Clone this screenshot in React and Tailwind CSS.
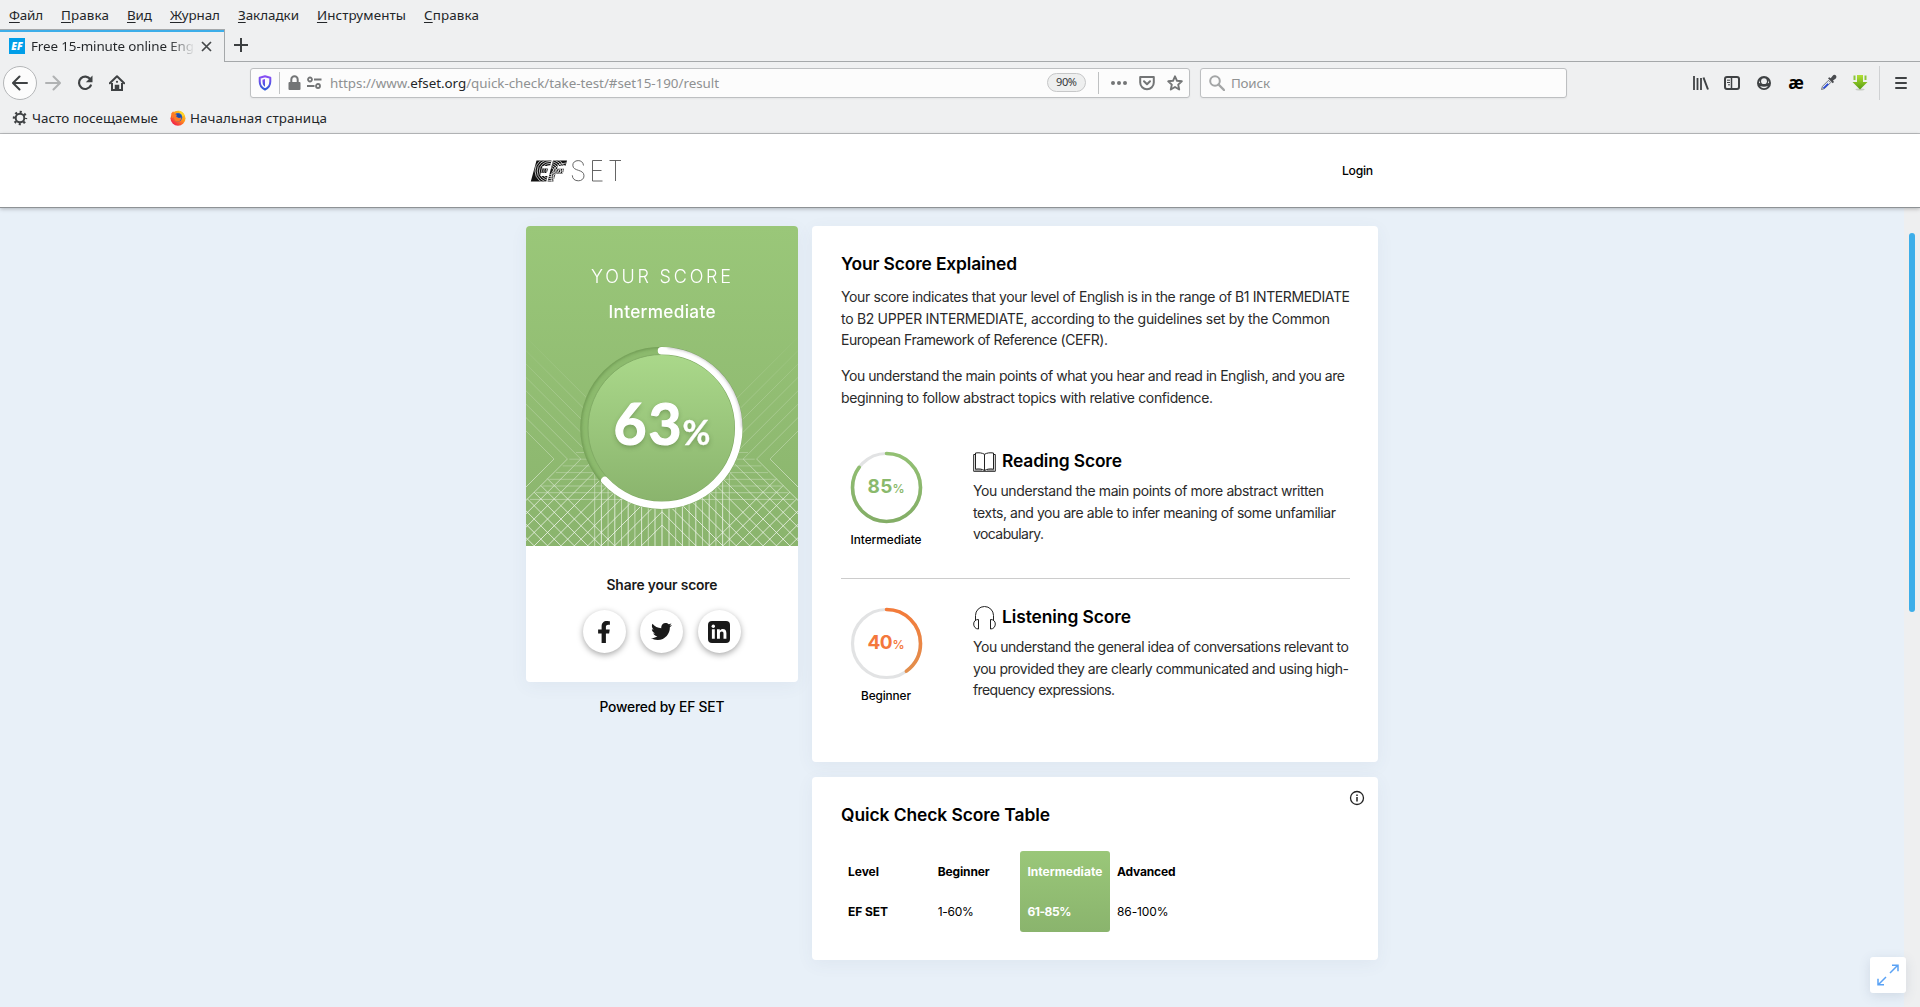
import React, { useLayoutEffect, useRef, useState } from "react";
import { FaFacebookF, FaTwitter } from "react-icons/fa";

/* Text set to an exact measure by adjusting its tracking. */
function Fit({ w, children, className = "" }) {
  const ref = useRef(null);
  const [tracking, setTracking] = useState(0);
  useLayoutEffect(() => {
    const natural = ref.current.getBoundingClientRect().width;
    const count = ref.current.textContent.length;
    setTracking((w - natural) / Math.max(1, count - 1));
  }, [w]);
  return (
    <span
      ref={ref}
      className={"inline-block whitespace-nowrap " + className}
      style={{ letterSpacing: tracking + "px", marginRight: -tracking + "px" }}
    >
      {children}
    </span>
  );
}

function Lines({ items, className = "" }) {
  return (
    <p className={"text-[14px] leading-[21.6px] text-[#2a2a2a] " + className}>
      {items.map(([w, text]) => (
        <span key={text} className="block h-[21.6px]">
          <Fit w={w}>{text}</Fit>
        </span>
      ))}
    </p>
  );
}

const menu = [
  ["Ф", "айл", 34],
  ["П", "равка", 48],
  ["В", "ид", 25],
  ["Ж", "урнал", 50],
  ["З", "акладки", 61],
  ["И", "нструменты", 89],
  ["С", "правка", 55],
];

function MenuBar() {
  return (
    <div className="flex h-[29px] gap-[18px] pl-[9px] text-[13.4px] leading-[31px] text-[#232629]">
      {menu.map(([first, rest, w]) => (
        <Fit key={first} w={w}>
          <span className="underline underline-offset-2">{first}</span>
          {rest}
        </Fit>
      ))}
    </div>
  );
}

function TabBar() {
  return (
    <div className="flex h-[33px]">
      <div className="flex w-[225px] shrink-0 items-center border-t border-r border-[#a5a8aa] bg-[#eff0f1]">
        <div className="flex h-full w-full items-center border-t-2 border-[#3daee9] pb-[2px] pl-[9px]">
          <span className="flex size-4 items-center justify-center bg-[#009ee8] text-[10px] font-black italic text-white">EF</span>
          <span className="ml-[6px] w-[164px] whitespace-nowrap bg-linear-to-r from-[#232629] from-84% to-transparent to-100% bg-clip-text text-[13.4px] text-transparent">
            <Fit w={163}>Free 15-minute online Eng</Fit>
          </span>
          <svg className="ml-[6px]" width="11" height="11" viewBox="0 0 11 11" fill="none" stroke="#45484a" strokeWidth="1.7">
            <path d="M1 1l9 9M10 1l-9 9" />
          </svg>
        </div>
      </div>
      <div className="flex flex-1 items-center border-b border-[#a5a8aa] pl-[9px]">
        <svg width="14" height="14" viewBox="0 0 14 14" stroke="#3c3f41" strokeWidth="2">
          <path d="M7 0v14M0 7h14" />
        </svg>
      </div>
    </div>
  );
}

function NavBar() {
  return (
    <div className="flex h-[41px] items-center pl-[3px]">
      <div className="flex size-[34px] items-center justify-center rounded-full border border-[#b4b6b8] bg-[#fcfcfc]">
        <svg width="16" height="16" viewBox="0 0 16 16" fill="none" stroke="#3f4244" strokeWidth="2" strokeLinecap="round" strokeLinejoin="round">
          <path d="M15 8H1.5M7.5 1.5L1 8l6.500 6.500" />
        </svg>
      </div>
      <svg className="ml-2" width="16" height="16" viewBox="0 0 16 16" fill="none" stroke="#b0b2b3" strokeWidth="2" strokeLinecap="round" strokeLinejoin="round">
        <path d="M1 8h13.500M8.500 1.500L15 8l-6.500 6.500" />
      </svg>
      <svg className="ml-4" width="16" height="16" viewBox="0 0 16 16" fill="none" stroke="#3f4244" strokeWidth="2.200">
        <path d="M13.300 4.200A6.200 6.200 0 1 0 13.800 10.500" strokeLinecap="round" />
        <path d="M15.500 0.500v6.700H8.800z" fill="#3f4244" stroke="none" />
      </svg>
      <svg className="ml-4" width="16" height="16" viewBox="0 0 16 16" fill="none" stroke="#3f4244" strokeWidth="2">
        <path d="M0.800 8.300L8 1.200l7.200 7.100" strokeLinecap="round" strokeLinejoin="round" />
        <path d="M3 8v7h10V8" />
        <path d="M6.500 15v-4.500h3V15" strokeWidth="1.500" fill="#3f4244" />
        <circle cx="8" cy="6.800" r="1.100" fill="#3f4244" stroke="none" />
      </svg>

      <div className="ml-[125px] flex h-[30px] w-[940px] items-center rounded-[3px] border border-[#bdbfc1] bg-[#fcfcfc] pl-[7px] shadow-xs">
        <svg width="14" height="16" viewBox="0 0 14 16" fill="none">
          <defs>
            <linearGradient id="shield" x1="0" y1="0" x2="0" y2="1">
              <stop offset="0" stopColor="#8a4df5" />
              <stop offset="1" stopColor="#2f5bd8" />
            </linearGradient>
          </defs>
          <path d="M7 1.200l5.300 1.500v3.800c0 3.800-2 6.400-5.300 8-3.300-1.600-5.300-4.200-5.300-8V2.700z" stroke="url(#shield)" strokeWidth="2" strokeLinejoin="round" />
          <path d="M7 4v7.800C5.300 10.600 4.500 9 4.500 6.500V4.700z" fill="url(#shield)" />
        </svg>
        <div className="ml-[7px] h-[22px] w-px bg-[#c2c4c5]" />
        <svg className="ml-[8px]" width="13" height="16" viewBox="0 0 13 16">
          <rect x="0.500" y="7" width="12" height="8" rx="1" fill="#737576" />
          <path d="M3.300 7.500V4.500a3.200 3.200 0 0 1 6.400 0v3" fill="none" stroke="#737576" strokeWidth="2" />
        </svg>
        <svg className="ml-[6px]" width="15" height="14" viewBox="0 0 15 14" fill="none" stroke="#737576" strokeWidth="1.800">
          <circle cx="3" cy="3.500" r="2" />
          <circle cx="11" cy="10" r="2" />
          <path d="M7 3.500h7.500M0 10h7.500" />
        </svg>
        <div className="mt-px ml-[8px] text-[13.4px] text-[#8f9192]">
          <Fit w={389}>
            https://www.<span className="text-[#232629]">efset.org</span>/quick-check/take-test/#set15-190/result
          </Fit>
        </div>
        <div className="ml-auto flex items-center">
          <span className="flex h-[19px] w-[39px] items-center justify-center rounded-full border border-[#c6c7c8] bg-[#eeefef] text-[11px] text-[#35383a]">
            <Fit w={21}>90%</Fit>
          </span>
          <div className="ml-[12px] h-[22px] w-px bg-[#bfc1c2]" />
          <svg className="ml-[12px]" width="16" height="4" viewBox="0 0 16 4" fill="#737576">
            <circle cx="2" cy="2" r="2" /><circle cx="8" cy="2" r="2" /><circle cx="14" cy="2" r="2" />
          </svg>
          <svg className="ml-[12px]" width="16" height="16" viewBox="0 0 16 16" fill="none" stroke="#737576" strokeWidth="2" strokeLinecap="round" strokeLinejoin="round">
            <path d="M1.200 2h13.600v5.500a6.800 6.800 0 0 1-13.600 0z" />
            <path d="M5 6.300l3 3 3-3" />
          </svg>
          <svg className="mr-[6px] ml-[12px]" width="16" height="16" viewBox="0 0 16 16" fill="none" stroke="#737576" strokeWidth="1.900" strokeLinejoin="round">
            <path d="M8 1.300l2 4.500 4.800.5-3.600 3.300 1 4.900L8 12l-4.200 2.500 1-4.900L1.200 6.300 6 5.800z" />
          </svg>
        </div>
      </div>

      <div className="ml-[10px] flex h-[30px] w-[367px] items-center rounded-[3px] border border-[#bdbfc1] bg-[#fcfcfc] pl-[8px] shadow-xs">
        <svg width="16" height="16" viewBox="0 0 16 16" fill="none" stroke="#a3a5a6" strokeWidth="2">
          <circle cx="6" cy="6" r="4.800" /><path d="M9.500 9.500l5.500 5.500" strokeWidth="2.400" strokeLinecap="round" />
        </svg>
        <span className="mt-px ml-[6px] text-[13.4px] text-[#909293]"><Fit w={39}>Поиск</Fit></span>
      </div>

      <div className="ml-auto flex items-center pr-[13px]">
        <svg width="16" height="16" viewBox="0 0 16 16" stroke="#3f4244" strokeWidth="2">
          <path d="M1 1v14M4.500 3v12M8 3v12" strokeWidth="1.800" /><path d="M10.500 2.500l4.500 12" />
        </svg>
        <svg className="ml-[15px]" width="16" height="16" viewBox="0 0 16 16" fill="none" stroke="#3f4244">
          <rect x="1" y="2" width="14" height="12" rx="2" strokeWidth="2" />
          <path d="M7.500 2v12" strokeWidth="1.500" /><path d="M3 5.200h3M3 7.500h3M4 9.800h2" strokeWidth="1" />
        </svg>
        <svg className="ml-[16px]" width="16" height="16" viewBox="0 0 16 16">
          <circle cx="8" cy="8" r="7" fill="#3f4244" />
          <circle cx="8" cy="6.200" r="2.900" fill="#eff0f1" />
          <path d="M3.800 5.200a5.300 5.300 0 0 0-.8 2.900l1.300.1a4.500 4.500 0 0 1-.5-3zM12.200 5.200a5.300 5.300 0 0 1 .8 2.900l-1.300.1a4.500 4.500 0 0 0 .5-3z" fill="#eff0f1" />
          <path d="M4.100 11c2.400 1.100 5.400 1.100 7.800 0-1 1.500-2.300 2.200-3.900 2.200S5.100 12.500 4.100 11z" fill="#eff0f1" />
        </svg>
        <span className="ml-[16px] flex h-5 w-4 items-center justify-center font-['Open_Sans',sans-serif] text-[17px] leading-4 font-bold text-black"><Fit w={15}>æ</Fit></span>
        <svg className="ml-[16px]" width="17" height="17" viewBox="0 0 17 17">
          <path d="M1.500 15.500l1-3.200 6-6 2.200 2.200-6 6z" fill="#dfe5ee" stroke="#74777c" strokeWidth="1" />
          <path d="M3 14l4.500-4.500 1 1L4.500 14.200z" fill="#2948d8" stroke="#2948d8" strokeWidth="0.500" />
          <path d="M8 4.300l1.300-1 1.400 1 2-2.600c1-1.200 2.600-1 3.200-.2.800.8.700 2.200-.4 3.200L13 6.600l1 1.300-1.300 1.300z" fill="#4a4c50" />
        </svg>
        <svg className="ml-[15px]" width="16" height="17" viewBox="0 0 16 17">
          <defs><linearGradient id="arrow" x1="0" y1="0" x2="0" y2="1"><stop offset="0" stopColor="#b2e034" /><stop offset="1" stopColor="#579c12" /></linearGradient></defs>
          <ellipse cx="8" cy="15.500" rx="4.500" ry="1" fill="#c9cdc5" />
          <path d="M5 1h6v7h4.500L8 15.500.5 8H5z" fill="url(#arrow)" />
          <path d="M1.500 1.500h2l0 4.500h-2l0-1.500M14.500 1.500h-2V6h2V4.500" fill="#8cc63a" />
        </svg>
        <div className="ml-[11px] h-[34px] w-px bg-[#cfd1d3]" />
        <svg className="ml-[15px]" width="12" height="12" viewBox="0 0 12 12" stroke="#3f4244" strokeWidth="2" strokeLinecap="round">
          <path d="M1 1h10M1 6h10M1 11h10" />
        </svg>
      </div>
    </div>
  );
}

function Bookmarks() {
  return (
    <div className="flex h-[31px] items-center border-b border-[#bcbec0] pl-[12px] text-[13.4px] text-[#232629]">
      <svg width="16" height="16" viewBox="-8 -8 16 16" fill="none" stroke="#3f4244">
        <circle r="4.300" strokeWidth="2" />
        <circle r="6" strokeWidth="2.400" strokeDasharray="2.100 2.612" strokeDashoffset="1.050" />
      </svg>
      <span className="ml-[4px]"><Fit w={126}>Часто посещаемые</Fit></span>
      <svg className="ml-[12px]" width="16" height="16" viewBox="0 0 16 16">
        <defs>
          <linearGradient id="fox" x1="1" y1="0" x2="0.200" y2="1">
            <stop offset="0" stopColor="#ffe226" /><stop offset="0.450" stopColor="#ff9a1a" /><stop offset="1" stopColor="#f0114f" />
          </linearGradient>
        </defs>
        <circle cx="8" cy="8.300" r="7.500" fill="url(#fox)" />
        <path d="M8.500 0.500c3.500.8 5.300 3 5.800 5l-2.300 1z" fill="#ffd52a" />
        <circle cx="8" cy="7.300" r="4.200" fill="#2460c8" />
        <path d="M1.200 3.500L3.200 1.200 4.500 4l2.500.7-1 2 2.500 1c1.200 0 2 0 2.500-.7.500 2.500-1 4.500-3.500 4.500S3.700 9.500 4 7.500L2 8z" fill="#ff7a26" />
        <path d="M6.500 4.300c2.500-1 5 .5 5 2.800-1 1.200-3 .7-4-.2z" fill="#1d4aa8" />
      </svg>
      <span className="ml-[4px]"><Fit w={137}>Начальная страница</Fit></span>
    </div>
  );
}

function SiteHeader() {
  return (
    <header className="relative z-10 h-[74px] border-b border-[#8e9295] bg-white shadow-[0_1px_4px_rgba(0,0,0,0.25)]">
      <div className="ml-[526px] flex h-[73px] w-[852px] items-center">
        <svg className="ml-[4px]" width="94" height="26" viewBox="0 0 94 26">
          <defs>
            <clipPath id="ef">
              <path d="M6.500 2.500H21.500L20 8H12.500L12 10.500H18L16.800 15H10.800L10.200 18H17.500L16.300 23.500H0.800z" />
              <path d="M23 2.500H37L35.600 8H27.800L27 10.800H34L32.800 15.800H25.500L23.400 23.500H17.600z" />
            </clipPath>
          </defs>
          <g clipPath="url(#ef)">
            <rect width="40" height="26" fill="#111" />
            <g fill="none" stroke="#fff" strokeWidth="0.700">
              {[4, 6.2, 8.4, 10.6, 12.8, 15].map((r) => <ellipse key={r} cx="20" cy="13" rx={r} ry={r * 0.9} />)}
              {[4, 6.2, 8.4, 10.6, 12.8, 15].map((r) => <ellipse key={"f" + r} cx="36" cy="20" rx={r} ry={r} />)}
            </g>
          </g>
          <g fill="none" stroke="#555" strokeWidth="0.900">
            <path d="M53.500 7.500C53.200 4 50.800 2.600 48.200 2.600c-3.200 0-5.400 1.900-5.400 4.600 0 6.600 11.200 3.500 11.200 10.600 0 3.100-2.400 5-5.700 5-3.600 0-5.900-2-6-5.500" />
            <path d="M72 2.500h-9.500v20.500H72.500M62.500 12.500h9" />
            <path d="M79.500 2.500H91M85.500 2.500V23" />
          </g>
        </svg>
        <span className="mt-[2px] mr-[5px] ml-auto text-[12.200px] font-medium text-black"><Fit w={31}>Login</Fit></span>
      </div>
    </header>
  );
}

const step = 13.4;
const range = (n) => Array.from({ length: n }, (_, i) => i);

/* Left half of the lattice behind the dial. */
function HalfPattern() {
  return (
    <g clipPath="url(#half)">
      {range(8).map((k) => (
        <path key={"u" + k} d={`M${28 + k * step} 233L${k * step - 105} 100`} opacity={0.75 - k * 0.03} />
      ))}
      {range(14).map((k) => (
        <path key={"d" + k} d={`M${28 + k * step} 233l-120 120`} />
      ))}
      {range(7).map((k) => {
        const c = 311.7 - k * step;
        const x = Math.max(-1, (274 - c) / 2);
        return <path key={"r" + k} d={`M${x} ${x + c}l70 70`} />;
      })}
      {range(8).map((k) => (
        <path key={"h" + k} d={`M${Math.max(4, 50 - k * 6.7)} ${226.5 + k * 6.7}H136`} opacity="0.6" />
      ))}
      {range(11).map((k) => (
        <path key={"v" + k} d={`M${68.7 + k * 6.7} ${248 + k * 3}V320`} opacity={k % 2 ? 1 : 0.7} />
      ))}
    </g>
  );
}

function ScoreHero() {
  const c = 2 * Math.PI * 77.3;
  return (
    <div className="relative h-[320px] overflow-hidden rounded-t-[4px] bg-linear-to-b from-[#9ac779] to-[#8ab46d]">
      <svg className="absolute inset-0" width="272" height="320" viewBox="0 0 272 320" fill="none">
        <defs>
          <clipPath id="half"><rect width="136" height="320" /></clipPath>
          <linearGradient id="fadeGrad" gradientUnits="userSpaceOnUse" x1="0" y1="0" x2="0" y2="320">
            <stop offset="0.320" stopColor="#000" /><stop offset="0.500" stopColor="#555" /><stop offset="0.750" stopColor="#808080" /><stop offset="0.900" stopColor="#ddd" />
          </linearGradient>
          <mask id="fade"><rect width="272" height="320" fill="url(#fadeGrad)" /></mask>
          <linearGradient id="disc" x1="0" y1="0" x2="0" y2="1">
            <stop offset="0" stopColor="#aad88a" /><stop offset="1" stopColor="#8ab46d" />
          </linearGradient>
          <filter id="soft" x="-20%" y="-20%" width="140%" height="140%"><feGaussianBlur stdDeviation="1.500" /></filter>
          <clipPath id="ring"><circle cx="135.500" cy="202" r="81.300" /></clipPath>
        </defs>
        <g mask="url(#fade)" stroke="#fff" strokeWidth="0.800">
          <HalfPattern />
          <g transform="translate(272 0) scale(-1 1)"><HalfPattern /></g>
        </g>
        <circle cx="135.500" cy="202" r="81.300" fill="#8cba6d" />
        <g clipPath="url(#ring)">
          <circle cx="135.500" cy="202" r="81.500" stroke="#648d49" strokeWidth="3" filter="url(#soft)" opacity="0.800" />
        </g>
        <circle cx="135.500" cy="202" r="73.500" fill="url(#disc)" stroke="#7fa963" strokeWidth="0.900" />
        <circle cx="135.500" cy="202" r="77.300" stroke="#fff" strokeWidth="7.500" strokeLinecap="round" strokeDasharray={`${c * 0.63} ${c}`} transform="rotate(-90 135.500 202)" />
        <g clipPath="url(#ring)">
          <path d="M142 120.800A81.400 81.400 0 0 1 217 202" stroke="#666" strokeWidth="2" opacity="0.550" filter="url(#soft)" />
        </g>
      </svg>
      <div className="relative flex flex-col items-center text-white">
        <div className="mt-[39px] -ml-[2px] h-[24px] text-[18px] leading-[24px] font-light"><Fit w={140}>YOUR SCORE</Fit></div>
        <div className="mt-[11px] h-[24px] text-[17.200px] leading-[24px] font-medium"><Fit w={107}>Intermediate</Fit></div>
        <div className="mt-[63px] flex h-[72px] items-baseline font-['Lato',sans-serif] leading-[72px] font-bold [text-shadow:0_2px_5px_rgba(60,90,40,0.45)]">
          <span className="text-[57px] [-webkit-text-stroke:1.2px_#fff]"><Fit w={68}>63</Fit></span>
          <span className="ml-[1px] text-[34px] [-webkit-text-stroke:0.4px_#fff]"><Fit w={28}>%</Fit></span>
        </div>
      </div>
    </div>
  );
}

function LinkedInIcon() {
  return (
    <svg width="22" height="22" viewBox="0 0 22 22">
      <rect width="22" height="22" rx="4" fill="#1a1a1a" />
      <g fill="#fff">
        <circle cx="5.300" cy="5.200" r="1.700" />
        <path d="M3.900 8.300h2.900v9.500H3.900zM9 8.300h2.800v1.400c.6-1 1.700-1.600 3-1.600 2.500 0 3.600 1.500 3.600 4.200v5.500h-2.900v-5c0-1.400-.5-2.200-1.700-2.200s-1.900.8-1.900 2.200v5H9z" />
      </g>
    </svg>
  );
}

function ShareCard() {
  const icons = [
    <FaFacebookF key="f" className="size-[22px]" />,
    <FaTwitter key="t" className="size-[21px]" />,
    <LinkedInIcon key="l" />,
  ];
  return (
    <div className="flex h-[136px] flex-col items-center text-[#1a1a1a]">
      <div className="mt-[27px] h-[24px] text-[13.800px] leading-[24px] font-semibold"><Fit w={111}>Share your score</Fit></div>
      <div className="mt-[13px] -ml-px flex gap-[14.500px]">
        {icons.map((icon) => (
          <span key={icon.key} className="flex size-[43px] items-center justify-center rounded-full bg-white shadow-[0_2px_6px_rgba(0,0,0,0.35)]">
            {icon}
          </span>
        ))}
      </div>
    </div>
  );
}

function Donut({ value, id, from, to, color, label, labelWidth }) {
  const c = 2 * Math.PI * 34;
  return (
    <div className="flex w-[90px] flex-col items-center pt-[2px]">
      <div className="grid place-items-center">
        <svg className="col-start-1 row-start-1" width="73" height="73" viewBox="0 0 73 73" fill="none">
          <defs>
            <linearGradient id={id} gradientUnits="userSpaceOnUse" x1="0" y1="0" x2="72" y2="0">
              <stop offset="0" stopColor={from} /><stop offset="1" stopColor={to} />
            </linearGradient>
          </defs>
          <circle cx="36.500" cy="36.500" r="34" stroke="#e2e3e4" strokeWidth="3.200" />
          <circle cx="36.500" cy="36.500" r="34" stroke={`url(#${id})`} strokeWidth="3.600" strokeLinecap="round" strokeDasharray={`${(c * value) / 100} ${c}`} transform="rotate(-90 36.500 36.500)" />
        </svg>
        <div className={"col-start-1 row-start-1 flex items-baseline font-bold " + color}>
          <span className="text-[19px]"><Fit w={25}>{String(value)}</Fit></span>
          <span className="text-[12px] font-semibold"><Fit w={10}>%</Fit></span>
        </div>
      </div>
      <div className="mt-[6px] h-[20px] text-[11.800px] leading-[20px] font-medium text-black"><Fit w={labelWidth}>{label}</Fit></div>
    </div>
  );
}

function BookIcon() {
  return (
    <svg className="mt-[2px]" width="23" height="20" viewBox="0 0 23 20" fill="none" stroke="#222" strokeWidth="1">
      <path d="M2.500 1C6 .500 9 .800 11.500 2.300 14 .800 17 .500 20.500 1v16.200c-3.500-.6-6.500-.2-9 1.300-2.500-1.500-5.500-1.900-9-1.300z" />
      <path d="M11.500 2.300v16.200" /><path d="M2.500 2.500H.7v16.800h21.600V2.500h-1.800" />
      <path d="M2 18h7M14 18h7" strokeWidth="0.700" />
    </svg>
  );
}

function HeadphonesIcon() {
  return (
    <svg className="mt-[2px]" width="23" height="24" viewBox="0 0 23 24" fill="none" stroke="#222" strokeWidth="1">
      <path d="M2.500 14.500V9.500a9 9 0 0 1 18 0v5" />
      <path d="M5.500 13.500v9.500C2.500 23 .7 20.800.7 18s1.800-4.500 4.800-4.500zM17.500 13.500v9.500c3 0 4.800-2.200 4.800-5s-1.800-4.500-4.800-4.500z" />
    </svg>
  );
}

function Skill({ donut, icon, title, titleWidth, lines }) {
  return (
    <div className="flex">
      {donut}
      <div className="ml-[42px]">
        <div className="flex h-[24px] items-center gap-[6px]">
          {icon}
          <h3 className="text-[17.400px] leading-[24px] font-semibold text-black"><Fit w={titleWidth}>{title}</Fit></h3>
        </div>
        <Lines className="mt-[7px]" items={lines} />
      </div>
    </div>
  );
}

function ExplainedCard() {
  return (
    <section className="h-[536px] rounded-[4px] bg-white pt-[26px] pr-[28px] pl-[29px] shadow-[0_4px_18px_rgba(70,90,120,0.06)]">
      <h2 className="h-[24px] text-[17.400px] leading-[24px] font-semibold text-black"><Fit w={176}>Your Score Explained</Fit></h2>
      <Lines
        className="mt-[10px]"
        items={[
          [509, "Your score indicates that your level of English is in the range of B1 INTERMEDIATE"],
          [489, "to B2 UPPER INTERMEDIATE, according to the guidelines set by the Common"],
          [267, "European Framework of Reference (CEFR)."],
        ]}
      />
      <Lines
        className="mt-[14.600px]"
        items={[
          [504, "You understand the main points of what you hear and read in English, and you are"],
          [372, "beginning to follow abstract topics with relative confidence."],
        ]}
      />
      <div className="mt-[40.400px] h-[130px] border-b border-[#cccccc]">
        <Skill
          donut={<Donut value={85} id="green" from="#83ad66" to="#93c173" color="text-[#8ab96c]" label="Intermediate" labelWidth={71} />}
          icon={<BookIcon />}
          title="Reading Score"
          titleWidth={120}
          lines={[
            [351, "You understand the main points of more abstract written"],
            [363, "texts, and you are able to infer meaning of some unfamiliar"],
            [71, "vocabulary."],
          ]}
        />
      </div>
      <div className="pt-[26px]">
        <Skill
          donut={<Donut value={40} id="orange" from="#e0914f" to="#f47b3a" color="text-[#f4783c]" label="Beginner" labelWidth={50} />}
          icon={<HeadphonesIcon />}
          title="Listening Score"
          titleWidth={129}
          lines={[
            [376, "You understand the general idea of conversations relevant to"],
            [376, "you provided they are clearly communicated and using high-"],
            [142, "frequency expressions."],
          ]}
        />
      </div>
    </section>
  );
}

const columns = [
  { head: "Level", hw: 31, cell: "EF SET", cw: 40, box: "text-black font-bold" },
  { head: "Beginner", hw: 52, cell: "1-60%", cw: 36, box: "text-black" },
  { head: "Intermediate", hw: 75, cell: "61-85%", cw: 44, box: "rounded-[3px] bg-linear-to-b from-[#9ac779] to-[#8ab46d] text-white font-bold" },
  { head: "Advanced", hw: 58.5, cell: "86-100%", cw: 51.5, box: "text-black" },
];

function TableCard() {
  return (
    <section className="relative mt-[15px] h-[183px] rounded-[4px] bg-white px-[29px] pt-[26px] shadow-[0_4px_18px_rgba(70,90,120,0.06)]">
      <svg className="absolute top-[13px] right-[13px]" width="16" height="16" viewBox="0 0 16 16" fill="none" stroke="#222" strokeWidth="1.300">
        <circle cx="8" cy="8" r="6.500" /><path d="M8 7v4.500M8 4.500v1.400" strokeWidth="1.500" />
      </svg>
      <h2 className="h-[24px] text-[17.400px] leading-[24px] font-semibold text-black"><Fit w={209}>Quick Check Score Table</Fit></h2>
      <div className="mt-[24px] grid grid-cols-[89.700px_89.700px_89.700px_89.700px] text-[12px] leading-[20px]">
        {columns.map((col) => (
          <div key={col.head} className={"flex h-[81px] flex-col gap-[20px] pt-[11px] pl-[7px] " + col.box}>
            <div className="h-[20px] font-bold"><Fit w={col.hw}>{col.head}</Fit></div>
            <div className="h-[20px]"><Fit w={col.cw}>{col.cell}</Fit></div>
          </div>
        ))}
      </div>
    </section>
  );
}

export default function App() {
  return (
    <div className="relative flex h-[1007px] w-[1920px] flex-col overflow-hidden bg-[#eff0f1] font-['Noto_Sans',sans-serif]">
      <MenuBar />
      <TabBar />
      <NavBar />
      <Bookmarks />
      <div className="flex flex-1 flex-col font-['Inter',sans-serif]">
        <SiteHeader />
        <div className="flex flex-1">
          <main className="flex flex-1 gap-[14px] bg-[#e8f0f8] pt-[18px] pl-[526px]">
            <div className="w-[272px]">
              <div className="rounded-[4px] bg-white shadow-[0_4px_18px_rgba(70,90,120,0.06)]">
                <ScoreHero />
                <ShareCard />
              </div>
              <div className="mt-[13px] flex h-[24px] justify-center text-[13.800px] leading-[24px] font-medium text-black"><Fit w={125}>Powered by EF SET</Fit></div>
            </div>
            <div className="w-[566px]">
              <ExplainedCard />
              <TableCard />
            </div>
          </main>
          <div className="w-[16px] bg-[#eeeff0] pt-[25px] pl-[5px]">
            <div className="h-[379px] w-[6px] rounded-full bg-[#3daee9]" />
          </div>
        </div>
      </div>
      <div className="absolute right-[14px] bottom-[14px] flex size-[36px] items-center justify-center rounded-[3px] bg-white shadow-[0_3px_12px_rgba(70,90,120,0.15)]">
        <svg width="22" height="22" viewBox="0 0 22 22" fill="none" stroke="#5aa2f5" strokeWidth="1.500">
          <path d="M13 9l7.500-7.500M15 1.200h6v6M9 13l-7.500 7.500M1 14.800v6h6" />
        </svg>
      </div>
    </div>
  );
}
